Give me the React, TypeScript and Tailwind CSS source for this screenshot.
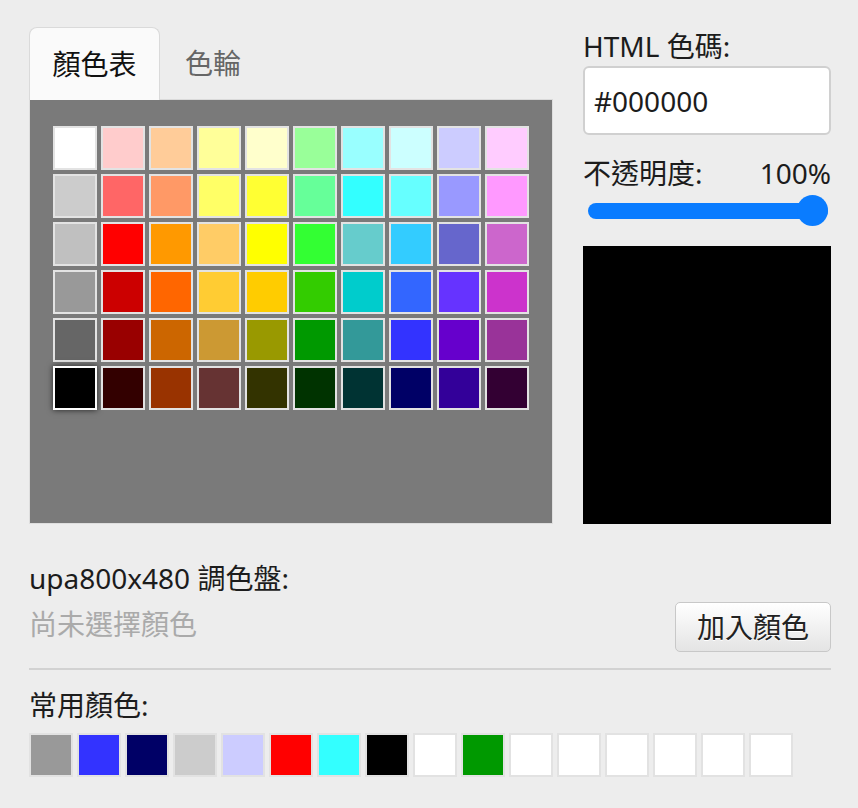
import React, { useState } from "react";

const PALETTE: string[][] = [
  ["#ffffff", "#ffcccc", "#ffcc99", "#ffff99", "#ffffcc", "#99ff99", "#99ffff", "#ccffff", "#ccccff", "#ffccff"],
  ["#cccccc", "#ff6666", "#ff9966", "#ffff66", "#ffff33", "#66ff99", "#33ffff", "#66ffff", "#9999ff", "#ff99ff"],
  ["#c0c0c0", "#ff0000", "#ff9900", "#ffcc66", "#ffff00", "#33ff33", "#66cccc", "#33ccff", "#6666cc", "#cc66cc"],
  ["#999999", "#cc0000", "#ff6600", "#ffcc33", "#ffcc00", "#33cc00", "#00cccc", "#3366ff", "#6633ff", "#cc33cc"],
  ["#666666", "#990000", "#cc6600", "#cc9933", "#999900", "#009900", "#339999", "#3333ff", "#6600cc", "#993399"],
  ["#000000", "#330000", "#993300", "#663333", "#333300", "#003300", "#003333", "#000066", "#330099", "#330033"],
];

const RECENT = [
  "#999999", "#3333ff", "#000066", "#cccccc", "#ccccff", "#ff0000", "#33ffff", "#000000",
  "#ffffff", "#009900", "#ffffff", "#ffffff", "#ffffff", "#ffffff", "#ffffff", "#ffffff",
];

export default function App() {
  const [selected, setSelected] = useState("#000000");
  const [tab, setTab] = useState<"table" | "wheel">("table");

  return (
    <div className="min-h-screen bg-[#ededed] pl-[29px] pr-[27px] pt-[27px] text-[28px] text-[#1c1c1c] font-['Noto_Sans','Noto_Sans_CJK_TC',sans-serif]">
      <div className="flex gap-[30px]">
        {/* left: tabs + swatch table */}
        <div className="w-[524px]">
          <div className="flex h-[73px] items-end border-b border-[#dadada]">
            <button
              onClick={() => setTab("table")}
              className={
                tab === "table"
                  ? "-mb-px h-[73px] w-[131px] rounded-t-[8px] border border-b-0 border-[#dadada] bg-[#fafafa] leading-none text-[#111]"
                  : "h-[72px] w-[131px] leading-none text-[#666]"
              }
            >
              顏色表
            </button>
            <button
              onClick={() => setTab("wheel")}
              className="h-[72px] px-[25px] leading-none text-[#666]"
            >
              色輪
            </button>
          </div>
          <div className="h-[424px] border border-t-0 border-[#dedede] bg-[#7a7a7a] pl-[23px] pt-[26px]">
            <div className="grid w-fit grid-cols-10 gap-[4px]">
              {PALETTE.flat().map((c, i) => (
                <button
                  key={i}
                  onClick={() => setSelected(c)}
                  className={
                    c === selected
                      ? "h-[44px] w-[44px] border-2 border-white shadow-[0_0_6px_rgba(0,0,0,0.7)]"
                      : "h-[44px] w-[44px] border-2 border-[#e3e3e3]"
                  }
                  style={{ backgroundColor: c }}
                />
              ))}
            </div>
          </div>
        </div>

        {/* right: code, opacity, preview */}
        <div className="flex w-[248px] flex-col">
          <div className="leading-[39px]">HTML 色碼:</div>
          <div className="flex h-[69px] items-center rounded-[6px] border-2 border-[#d0d0d0] bg-white px-[9px]">
            {selected}
          </div>
          <div className="mt-[16px] flex h-[44px] items-center justify-between">
            <span>不透明度:</span>
            <span>100%</span>
          </div>
          <div className="relative ml-[5px] mr-[3px] h-[32px]">
            <div className="mt-[8px] h-[16px] rounded-full bg-[#0a7cff]" />
            <div className="absolute right-0 top-0 h-[31px] w-[31px] rounded-full bg-[#0a7cff]" />
          </div>
          <div className="mt-[19px] flex-1" style={{ backgroundColor: selected }} />
        </div>
      </div>

      {/* palette section */}
      <div className="w-[802px]">
        <div className="mt-[34px] leading-[40px]">upa800x480 調色盤:</div>
        <div className="mt-[4px] flex h-[50px] justify-between">
          <span className="leading-[44px] text-[#aaaaaa]">尚未選擇顏色</span>
          <button className="h-[50px] w-[156px] rounded-[5px] border border-[#c8c8c8] bg-gradient-to-b from-white to-[#e4e4e4] text-[#222] [text-shadow:0_1px_0_#fff]">
            加入顏色
          </button>
        </div>
        <div className="mt-[16px] h-[2px] bg-[#d2d2d2]" />
        <div className="mt-[15px] leading-[40px]">常用顏色:</div>
        <div className="mt-[8px] flex gap-[4px]">
          {RECENT.map((c, i) => (
            <button
              key={i}
              onClick={() => setSelected(c)}
              className="h-[44px] w-[44px] border-2 border-[#e2e2e2]"
              style={{ backgroundColor: c }}
            />
          ))}
        </div>
      </div>
    </div>
  );
}
